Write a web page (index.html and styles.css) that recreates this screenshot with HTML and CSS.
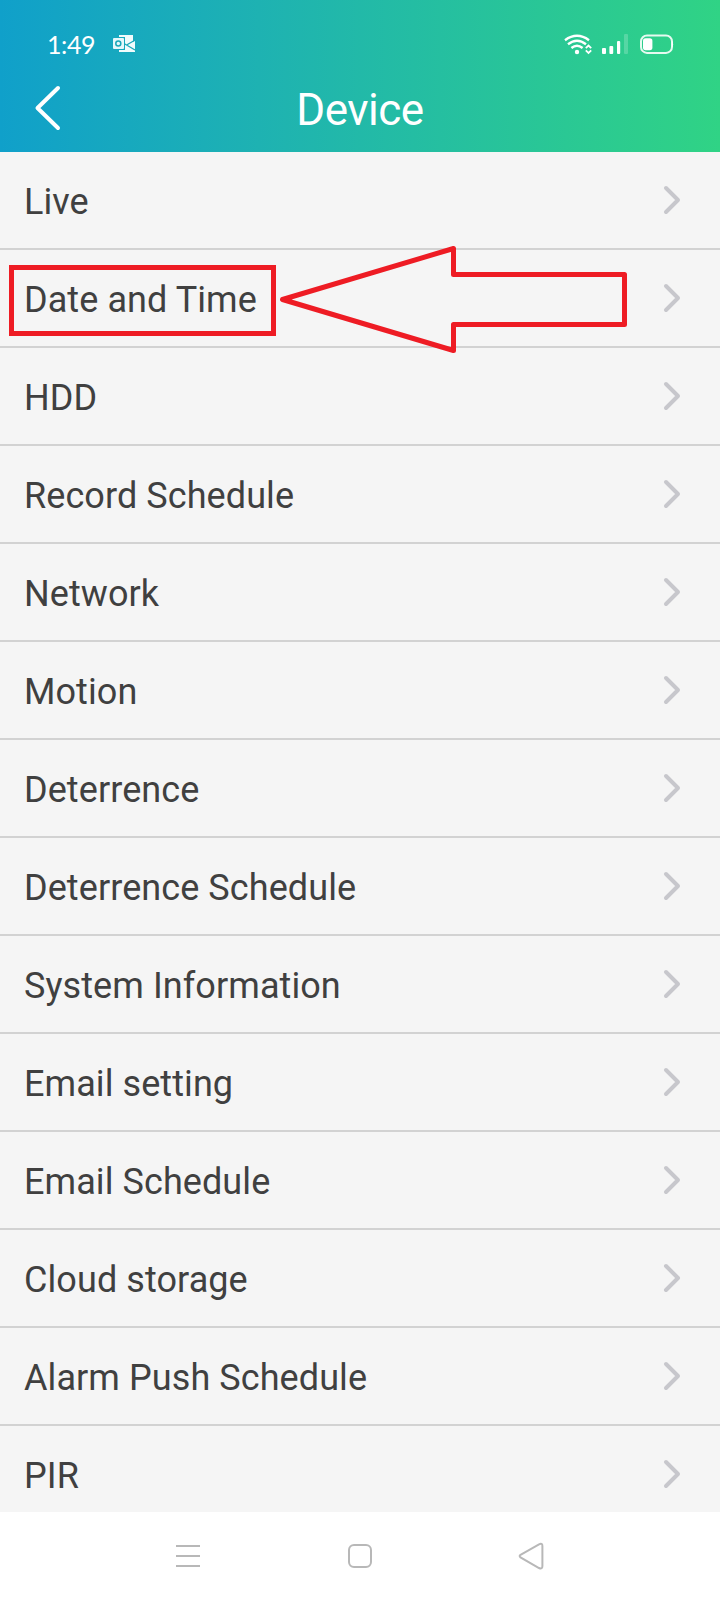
FILE: index.html
```
<!DOCTYPE html>
<html lang="en">
<head>
    <meta charset="UTF-8">
    <meta name="viewport" content="width=device-width, initial-scale=1.0">
    <title>Device</title>
    <link rel="stylesheet" href="styles.css">
</head>
<body>
    <!-- shared chevron for the menu rows -->
    <svg class="sprite" width="0" height="0">
        <symbol id="chevron" viewBox="0 0 18 30">
            <path d="M3 3l12 12L3 27"/>
        </symbol>
    </svg>

    <header class="header">
        <div class="status-bar">
            <span class="time">1:49</span>
            <svg class="mail-icon" width="24" height="20" viewBox="0 0 24 20">
                <path fill="#f0fbfc" d="M7 1h14v7l2-1v11H7v-2h6V3H7z"/>
                <path fill="none" stroke="#19a8b9" stroke-width="1.3" d="M21.500 7L15 10.800M12 9.500L23 16"/>
                <rect fill="#e6f8fb" x="1" y="4" width="11" height="11" rx="1"/>
                <circle fill="none" stroke="#19a8b9" stroke-width="1.5" cx="6.300" cy="9.500" r="2.500"/>
            </svg>
            <div class="status-icons">
                <svg width="28" height="22" viewBox="0 0 28 22">
                    <g fill="none" stroke="#fff" stroke-width="2.4">
                        <path d="M1 6.200Q13 -2.600 25 6.200"/>
                        <path d="M4 10.300Q13 3.200 22 10.300"/>
                        <path d="M7.400 14Q13 9.400 18.600 14"/>
                    </g>
                    <circle fill="#fff" cx="13" cy="18" r="2.200"/>
                    <path fill="none" stroke="#fff" stroke-width="1.8" d="M21.800 14.200l2.700-2.600 2.700 2.600M21.800 16.400l2.700 2.600 2.700-2.600"/>
                </svg>
                <svg width="27" height="22" viewBox="0 0 27 22">
                    <rect fill="#fff" x="0" y="14" width="4" height="6" rx="1"/>
                    <rect fill="#fff" x="7.400" y="12" width="3.800" height="8" rx="1"/>
                    <rect fill="#fff" x="15" y="7" width="3.200" height="13" rx="1"/>
                    <rect fill="#fff" fill-opacity=".2" x="22" y="0" width="4" height="20" rx="1"/>
                </svg>
                <svg width="35" height="22" viewBox="0 0 35 22">
                    <rect fill="none" stroke="#e6faf0" stroke-width="2" x="2" y="1.500" width="31" height="17.400" rx="6"/>
                    <rect fill="#fff" x="4" y="4.200" width="9.400" height="12" rx="2.600"/>
                    <path fill="#fff" d="M32.800 6.500q2.600 3.700 0 7.400z"/>
                </svg>
            </div>
        </div>
        <div class="title-bar">
            <svg class="back" width="28" height="46" viewBox="0 0 28 46">
                <path d="M24 3L3.500 23 24 43"/>
            </svg>
            <h1>Device</h1>
        </div>
    </header>

    <main class="menu">
        <div class="menu-item"><span>Live</span><svg class="chevron"><use href="#chevron"/></svg></div>
        <div class="menu-item marked">
            <span>Date and Time</span><svg class="chevron"><use href="#chevron"/></svg>
            <div class="highlight"></div>
            <svg class="arrow" width="356" height="112" viewBox="0 0 356 112">
                <path d="M10.500 57.500L181.500 6.500V32.500H352.500V82.500H181.500V108.500Z"/>
            </svg>
        </div>
        <div class="menu-item"><span>HDD</span><svg class="chevron"><use href="#chevron"/></svg></div>
        <div class="menu-item"><span>Record Schedule</span><svg class="chevron"><use href="#chevron"/></svg></div>
        <div class="menu-item"><span>Network</span><svg class="chevron"><use href="#chevron"/></svg></div>
        <div class="menu-item"><span>Motion</span><svg class="chevron"><use href="#chevron"/></svg></div>
        <div class="menu-item"><span>Deterrence</span><svg class="chevron"><use href="#chevron"/></svg></div>
        <div class="menu-item"><span>Deterrence Schedule</span><svg class="chevron"><use href="#chevron"/></svg></div>
        <div class="menu-item"><span>System Information</span><svg class="chevron"><use href="#chevron"/></svg></div>
        <div class="menu-item"><span>Email setting</span><svg class="chevron"><use href="#chevron"/></svg></div>
        <div class="menu-item"><span>Email Schedule</span><svg class="chevron"><use href="#chevron"/></svg></div>
        <div class="menu-item"><span>Cloud storage</span><svg class="chevron"><use href="#chevron"/></svg></div>
        <div class="menu-item"><span>Alarm Push Schedule</span><svg class="chevron"><use href="#chevron"/></svg></div>
        <div class="menu-item"><span>PIR</span><svg class="chevron"><use href="#chevron"/></svg></div>
    </main>

    <nav class="nav-bar">
        <svg width="28" height="28" viewBox="0 0 28 28">
            <path d="M2 4h24M2 14h24M2 24h24"/>
        </svg>
        <svg width="28" height="28" viewBox="0 0 28 28">
            <rect x="3" y="3" width="22" height="22" rx="5"/>
        </svg>
        <svg width="28" height="28" viewBox="0 0 28 28">
            <path d="M2.500 12.800L21 2.300Q24.400 .8 24.400 4V24Q24.400 27.500 21 26L2.500 15.400Q.8 14 2.500 12.800Z"/>
        </svg>
    </nav>
</body>
</html>
```

FILE: styles.css
```
:root {
    --bg-color: #f5f5f5;
    --text-color: #404040;
    --line-color: #d2d2d2;
    --mark-color: #ee1c24;
}

* {
    box-sizing: border-box;
}

body {
    margin: 0;
    height: 1600px;
    display: flex;
    flex-direction: column;
    overflow: hidden;
    background-color: var(--bg-color);
    font-family: Roboto, sans-serif;
    color: var(--text-color);
}

svg {
    display: block;
    flex: none;
}

.sprite {
    position: absolute;
}

.header {
    height: 152px;
    flex: none;
    background: linear-gradient(to right, #10a0ca, #1eb2b2 36%, #30d385);
    color: white;
}

.status-bar {
    display: flex;
    height: 66px;
    padding: 24px 46px 0 47px;
    align-items: center;
}

.time {
    width: 65px;
    padding-bottom: 3px;
    font-family: Lato, sans-serif;
    font-size: 25px;
    line-height: 30px;
    letter-spacing: -0.4px;
}

.mail-icon {
    margin-bottom: 2px;
}

.status-icons {
    display: flex;
    margin-left: auto;
    gap: 10px;
}

.title-bar {
    display: grid;
    grid-template-columns: 36px 1fr 36px;
    align-items: center;
    height: 86px;
    padding: 0 33px 2px 34px;
}

.title-bar h1 {
    margin: 0 1px 0 0;
    padding-top: 3px;
    text-align: center;
    font-size: 44px;
    font-weight: 400;
    line-height: 80px;
    letter-spacing: -0.5px;
}

.back path {
    fill: none;
    stroke: white;
    stroke-width: 4;
    stroke-linecap: round;
    stroke-linejoin: round;
}

.menu {
    height: 1360px;
    overflow: hidden;
}

.menu-item {
    display: flex;
    justify-content: space-between;
    align-items: center;
    height: 98px;
    padding: 0 39px 0 24px;
    border-bottom: 2px solid var(--line-color);
    font-size: 36px;
    line-height: 42px;
    letter-spacing: 0.08px;
}

.menu-item span {
    padding-top: 4px;
}

.chevron {
    width: 18px;
    height: 30px;
    fill: none;
    stroke: #c7c7cc;
    stroke-width: 4;
    stroke-linecap: round;
    stroke-linejoin: round;
}

/* red annotation over the Date and Time row */
.marked {
    position: relative;
}

.highlight {
    position: absolute;
    left: 9px;
    top: 15px;
    width: 267px;
    height: 71px;
    border: 5px solid var(--mark-color);
}

.arrow {
    position: absolute;
    left: 272px;
    top: -8px;
}

.arrow path {
    fill: none;
    stroke: var(--mark-color);
    stroke-width: 5;
    stroke-linejoin: round;
}

.nav-bar {
    display: flex;
    justify-content: space-between;
    align-items: center;
    height: 88px;
    padding: 0 174px;
    background-color: white;
}

.nav-bar svg {
    fill: none;
    stroke: #b8b8b8;
    stroke-width: 2;
}
```
